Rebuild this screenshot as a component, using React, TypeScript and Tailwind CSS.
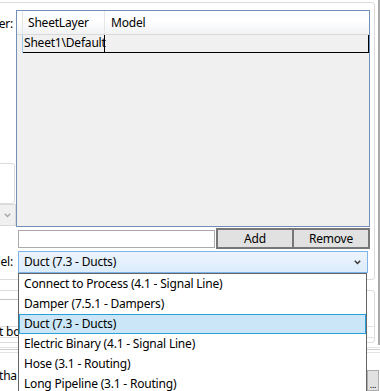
import React from "react";

const items = [
  "Connect to Process (4.1 - Signal Line)",
  "Damper (7.5.1 - Dampers)",
  "Duct (7.3 - Ducts)",
  "Electric Binary (4.1 - Signal Line)",
  "Hose (3.1 - Routing)",
  "Long Pipeline (3.1 - Routing)",
];

const Chevron = ({ className }: { className?: string }) => (
  <svg width="7" height="5" viewBox="0 0 7 5" className={className}>
    <polyline points="0.8,0.8 3.5,3.6 6.2,0.8" fill="none" stroke="currentColor" strokeWidth="1.4" />
  </svg>
);

export default function App() {
  return (
    <div className="relative h-[391px] w-[380px] overflow-hidden bg-white font-['Noto_Sans',sans-serif] text-[12px] tracking-[-0.2px] text-black">
      <div className="flex h-[345px]">
        <div className="flex w-[377px] flex-col">
          {/* upper group */}
          <div className="-ml-[4px] mt-[2px] h-[278px] w-[379px] rounded-[3px] border border-[#dcdcdc]">
            <div className="flex flex-col pt-[7px]">
              <div className="flex h-[217px]">
                <div className="flex w-[19px] flex-col">
                  <div className="mt-[6px] flex h-[16px] justify-end whitespace-nowrap pr-[3px] leading-[16px]">
                    Layer:
                  </div>
                  <div className="flex-1" />
                  <div className="h-[41px] w-[18px] rounded-[3px] border border-[#dcdcdc]" />
                  <div className="mb-[1px] flex h-[22px] w-[19px] items-center justify-end border border-[#dadada] bg-[#f0f0f0] pr-[4px] text-[#a6a6a6]">
                    <Chevron />
                  </div>
                </div>
                <div className="flex w-[354px] flex-col border border-[#7090b8] bg-[#f0f0f0]">
                  <div className="flex h-[24px] border-b border-[#dadada] bg-gradient-to-b from-white from-40% to-[#f1f2f4]">
                    <div className="w-[6px] border-r border-[#e6e6e6]" />
                    <div className="flex w-[82px] items-center border-r border-[#e6e6e6] pl-[5px] pt-[1px] leading-[16px]">
                      SheetLayer
                    </div>
                    <div className="flex flex-1 items-center pl-[6px] pt-[1px] leading-[16px]">Model</div>
                  </div>
                  <div className="flex h-[18px]">
                    <div className="w-[6px] border-r border-[#9ccbf0]" />
                    <div className="w-[82px] border-b border-r border-black pl-[1px] leading-[16px]">
                      Sheet1\Default
                    </div>
                    <div className="flex-1 border-b border-r border-black" />
                  </div>
                </div>
              </div>
              <div className="mt-[1px] flex h-[21px] items-center">
                <div className="w-[21px]" />
                <div className="h-[18px] w-[197px] border border-[#ababab] bg-white" />
                <button className="ml-[1px] flex h-[21px] w-[78px] items-center justify-center border-2 border-[#777777] bg-[#e1e1e1] leading-[16px]">
                  Add
                </button>
                <button className="-ml-[2px] flex h-[21px] w-[78px] items-center justify-center border-2 border-[#777777] bg-[#e1e1e1] leading-[16px]">
                  Remove
                </button>
              </div>
              <div className="mt-[2px] flex h-[22px] items-center">
                <div className="flex w-[21px] justify-end whitespace-nowrap pr-[5px] leading-[16px]">Model:</div>
                <div className="flex h-[22px] w-[350px] items-center justify-between border border-[#7eb4ea] bg-gradient-to-b from-[#ecf4fc] to-[#dcecfc] pl-[5px] pr-[6px] leading-[16px]">
                  <span>Duct (7.3 - Ducts)</span>
                  <Chevron className="text-[#333333]" />
                </div>
              </div>
            </div>
          </div>
          {/* lower group */}
          <div className="-ml-[4px] mt-[10px] h-[53px] w-[379px] rounded-[3px] border border-[#dcdcdc]">
            <div className="ml-[3px] mt-[8px] h-px w-[24px] bg-[#c4c4c4]" />
            <div className="ml-[3px] mt-[26px] h-[12px] whitespace-nowrap border-y border-[#e3e3e3] leading-[10px]">
              <span className="-ml-[1px]">t bo</span>
            </div>
          </div>
        </div>
        <div className="w-[3px] border-r-2 border-[#a8a8a8]" />
      </div>
      <div className="flex h-[46px] flex-col">
        <div className="mt-[2px] h-px bg-[#e3e3e3]" />
        <div className="mt-[1px] h-px bg-[#cdcdcd]" />
        <div className="mt-[2px] h-px bg-[#e3e3e3]" />
        <div className="mt-[17px] flex flex-1">
          <div className="-mt-[2px] flex-1 whitespace-nowrap leading-[16px]">
            <span className="-ml-[1px]">tha</span>
          </div>
          <div className="mr-[1px] flex w-[12px] items-end justify-center border border-[#adadad] bg-[#e1e1e1] text-[9px] leading-[10px]">
            ...
          </div>
        </div>
      </div>

      {/* open combo list */}
      <div className="absolute left-[18px] top-[273px] h-[130px] w-[349px] border border-[#646464] bg-white">
        {items.map((item, i) => (
          <div
            key={item}
            className={
              i === 2
                ? "h-[20px] whitespace-nowrap border border-[#29a0dc] bg-[#cbe6f6] pl-[4px] leading-[18px]"
                : "h-[20px] whitespace-nowrap pl-[5px] leading-[20px]"
            }
          >
            {item}
          </div>
        ))}
      </div>
    </div>
  );
}
